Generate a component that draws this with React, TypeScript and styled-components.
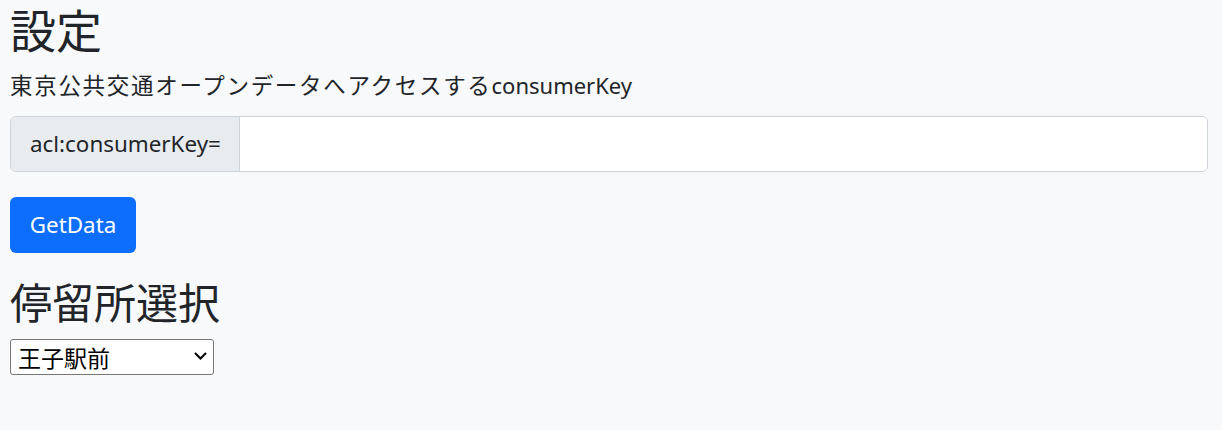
import styled, { createGlobalStyle } from "styled-components"

const GlobalStyle = createGlobalStyle`
    body{
        margin: 0;
        background-color: #f8f9fa;
        color: #212529;
        font-family: "Noto Sans", "Noto Sans CJK JP", sans-serif;
    }
`

function App() {
    return (
        <>
            <GlobalStyle />
            <Page>
                <Title>設定</Title>
                <Lead>東京公共交通オープンデータへアクセスする<Latin>consumerKey</Latin></Lead>
                <InputGroup>
                    <InputLabel>acl:consumerKey=</InputLabel>
                    <KeyInput type="text" />
                </InputGroup>
                <PrimaryButton>GetData</PrimaryButton>
                <Title $small>停留所選択</Title>
                <SelectWrap>
                    <StopSelect defaultValue="oji">
                        <option value="oji">王子駅前</option>
                    </StopSelect>
                    <Chevron viewBox="0 0 13 8" aria-hidden="true">
                        <path d="M1 1 L6.5 6.5 L12 1" />
                    </Chevron>
                </SelectWrap>
            </Page>
        </>
    )
}

const Page = styled.div`
    padding: 0 14px 0 10px;
    display: flex;
    flex-direction: column;
    align-items: flex-start;
`

const Title = styled.h1<{ $small?: boolean }>`
    font-family: "Noto Sans CJK JP", sans-serif;
    font-weight: 400;
    font-size: ${p => p.$small ? '42px' : '46px'};
    line-height: 1.2;
    margin: ${p => p.$small ? '23px 0 13px' : '1px 0 13px'};
`

const Lead = styled.p`
    font-size: 22.5px;
    line-height: 1.5;
    letter-spacing: 1.7px;
    margin: 0 0 13px;
`

const Latin = styled.span`
    letter-spacing: 0;
    font-size: 22px;
`

const InputGroup = styled.div`
    display: flex;
    align-self: stretch;
    height: 56px;
    border: 1px solid #ced4da;
    border-radius: 6px;
    overflow: hidden;
    box-sizing: border-box;
`

const InputLabel = styled.span`
    display: flex;
    align-items: center;
    padding: 0 19px;
    width: 229px;
    box-sizing: border-box;
    background-color: #e9ecef;
    border-right: 1px solid #ced4da;
    font-size: 22.4px;
    white-space: nowrap;
`

const KeyInput = styled.input`
    flex: 1;
    border: 0;
    outline: none;
    background: #fff;
    font-size: 20px;
    padding: 0 16px;
`

const PrimaryButton = styled.button`
    margin-top: 25px;
    height: 56px;
    width: 126px;
    border: 0;
    border-radius: 6px;
    background-color: #0d6efd;
    color: #fff;
    font-family: "Noto Sans", sans-serif;
    font-size: 22.4px;
    cursor: pointer;
`

const SelectWrap = styled.div`
    position: relative;
    width: 204px;
    height: 36px;
`

const StopSelect = styled.select`
    appearance: none;
    width: 100%;
    height: 100%;
    font-family: "Noto Sans CJK JP", sans-serif;
    font-size: 23px;
    color: #000;
    background: #fff;
    border: 1px solid #767676;
    border-radius: 3px;
    padding: 0 30px 0 7px;
`

const Chevron = styled.svg`
    position: absolute;
    right: 7px;
    top: 13px;
    width: 13px;
    height: 8px;
    fill: none;
    stroke: #000;
    stroke-width: 2;
    pointer-events: none;
`

export default App
